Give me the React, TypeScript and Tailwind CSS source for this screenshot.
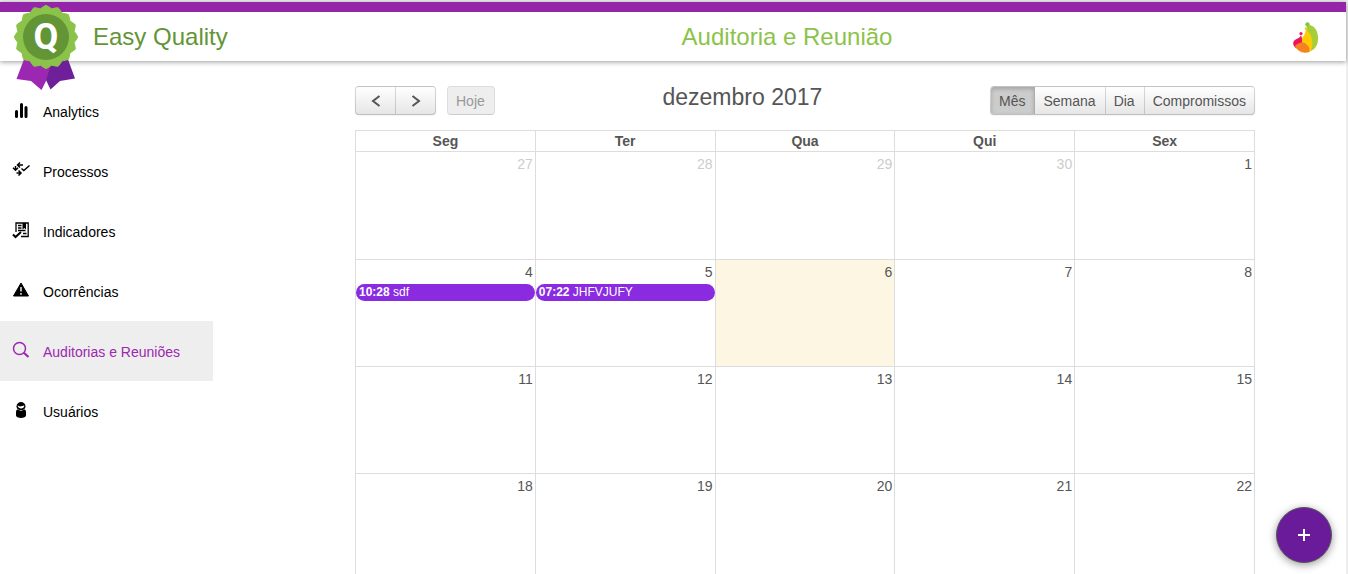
import type { ReactNode } from "react";

const SEAL = Array.from({ length: 64 }, (_, i) => {
  const a = (i / 64) * Math.PI * 2 - Math.PI / 2;
  const r = 30.2 + 1.5 * Math.cos(((i % 4) / 4) * Math.PI * 2);
  return `${(36 + r * Math.cos(a)).toFixed(2)},${(33 + r * Math.sin(a)).toFixed(2)}`;
}).join(" ");

function Badge() {
  return (
    <svg width="72" height="88" viewBox="0 0 72 88" aria-hidden="true">
      <path d="M16 50 L6.500 75 L21 77 L31.500 86 L36 77 L44 58Z" fill="#9c27b0" />
      <path d="M56 50 L65 74.500 L50 77 L40.500 85.500 L36 76 L42 58Z" fill="#6f1f99" />
      <polygon points={SEAL} fill="#8bc34a" stroke="#8bc34a" strokeLinejoin="round" />
      <circle cx="36" cy="33" r="23" fill="#639536" />
      <text x="36" y="45" textAnchor="middle" fill="#fff" fontSize="36" fontWeight="700" fontFamily="Roboto, sans-serif">Q</text>
    </svg>
  );
}

function Flame() {
  return (
    <svg width="28" height="32" viewBox="0 0 28 32" aria-hidden="true">
      <path d="M15 5C18 3 23 5 25 11C27 17 27 26 19 30L13 18Z" fill="#a6ce39" />
      <path d="M13.500 8C16 10 19 13 20 18C21 24 20 28 18 31C13 32 7 29 8 22C9 16 14 15 13.500 8Z" fill="#ffcb05" />
      <path d="M9 14C10 17 11 20 9 24L4 27C1 25 0 21 3 19C6 17 8 17 9 14Z" fill="#ed145b" />
      <path d="M3 25C6 22 11 20 14 23C18 26 18 29 17 31C11 33 5 30 3 25Z" fill="#f58220" />
      <circle cx="15.500" cy="3.500" r="2.200" fill="#8bc53f" />
      <circle cx="9" cy="12.500" r="1.600" fill="#ed145b" />
      <circle cx="14" cy="7.500" r="1.300" fill="#d7d52a" />
    </svg>
  );
}

function Icon({ children }: { children: ReactNode }) {
  return (
    <svg width="18" height="18" viewBox="0 0 18 18" fill="none" stroke="currentColor" strokeWidth="1.500" aria-hidden="true">
      {children}
    </svg>
  );
}

const NAV = [
  {
    label: "Analytics",
    icon: <path d="M4.500 15.500V10.500M9.500 15.500V3.500M14 15.500V6.500" strokeWidth="3" strokeLinecap="round" />,
  },
  {
    label: "Processos",
    icon: (
      <path d="M11 4H6M8 1.500L5.500 4L8 6.500M3.500 5V8.500M1 6.800L3.500 9.300L6 6.800M4.500 12H8M6.500 9.500L9 12L6.500 14.500M9.500 7.500L11.800 9.500L17.500 4.500" />
    ),
  },
  {
    label: "Indicadores",
    icon: (
      <>
        <path d="M4 11V2H16.200V15.500H9M6 4.500H9.500M6 7H9.500M6 9.500H13.500M11 12.500H14.500" strokeWidth="1.300" />
        <path d="M10.500 2V8.500L12.300 7L14 8.500V2Z" fill="currentColor" stroke="none" />
        <path d="M1 13.500L3.500 16L9 11" strokeWidth="2" />
      </>
    ),
  },
  {
    label: "Ocorrências",
    icon: (
      <>
        <path d="M9 2L16.500 15H1.500Z" fill="currentColor" strokeLinejoin="round" strokeWidth="1" />
        <path d="M9 6V10.500M9 12V13.700" stroke="#fff" strokeWidth="1.400" />
      </>
    ),
  },
  {
    label: "Auditorias e Reuniões",
    active: true,
    icon: (
      <>
        <circle cx="7.500" cy="7.500" r="6" />
        <path d="M11.800 11.800L16.500 16" strokeWidth="2.200" />
      </>
    ),
  },
  {
    label: "Usuários",
    icon: (
      <g fill="currentColor" stroke="none">
        <path d="M4.500 5.500C4.500 -.500 13.500 -.500 13.500 5.500C13.500 10.500 4.500 10.500 4.500 5.500Z" />
        <path d="M5.700 4.500L8 5.500L12.300 4.500C12.300 8.500 6 8.500 5.700 4.500Z" fill="#fff" />
        <path d="M4 11C4 9 5 8.500 6 8.500L9 10L12 8.500C13 8.500 14 9 14 11V14.500C14 17.800 4 17.800 4 14.500Z" />
      </g>
    ),
  },
];

const DAYS = ["Seg", "Ter", "Qua", "Qui", "Sex"];
const WEEKS = [
  [27, 28, 29, 30, 1],
  [4, 5, 6, 7, 8],
  [11, 12, 13, 14, 15],
  [18, 19, 20, 21, 22],
];
const EVENTS: Record<number, { time: string; title: string }> = {
  4: { time: "10:28", title: "sdf" },
  5: { time: "07:22", title: "JHFVJUFY" },
};
const VIEWS = ["Mês", "Semana", "Dia", "Compromissos"];

const GROUP =
  "flex h-[29px] overflow-hidden rounded border border-black/15 border-b-black/25 bg-linear-to-b from-white to-[#e6e6e6] shadow-xs";

export default function App() {
  return (
    <div className="flex h-screen flex-col overflow-hidden bg-[#eee] pt-px pr-px font-['Liberation_Sans',Arial,sans-serif] text-sm text-[#555]">
      <div className="flex min-h-0 flex-1 flex-col border-t border-r border-[#eee] bg-white">
        <header className="relative z-10 flex h-[59px] shrink-0 items-center justify-between border-t-10 border-[#9425a8] bg-white pr-[26px] shadow-[0_1px_5px_rgba(0,0,0,0.4)]">
          <a href="#" className="flex w-[282px] items-center text-2xl text-[#639536]">
            <span className="relative h-6 w-[93px]">
              <span className="absolute -top-[21px] left-[10px]"><Badge /></span>
            </span>
            Easy Quality
          </a>
          <h1 className="text-2xl text-[#8bc34a]">Auditoria e Reunião</h1>
          <Flame />
        </header>

        <div className="flex min-h-0 flex-1">
          <nav className="w-[264px] shrink-0 pt-5">
            {NAV.map((item) => (
              <a
                key={item.label}
                href="#"
                className={`flex h-[60px] w-[213px] items-center gap-[13px] pt-0.5 pl-3 ${item.active ? "bg-[#eee] text-[#9c27b0]" : "text-black"}`}
              >
                <span className="pb-1"><Icon>{item.icon}</Icon></span>
                {item.label}
              </a>
            ))}
          </nav>

          <main className="min-w-0 flex-1 pt-[25px]">
            <div className="mx-auto max-w-[900px]">
              <div className="mb-[15px] flex items-center justify-between">
                <div className="flex gap-[11px]">
                  <div className={GROUP}>
                    <button type="button" aria-label="Anterior" className="flex w-10 items-center justify-center border-r border-black/15">
                      <svg width="10" height="12" viewBox="0 0 10 12" fill="none" stroke="#555" strokeWidth="2"><path d="M8.500 1L2 6L8.500 11" /></svg>
                    </button>
                    <button type="button" aria-label="Próximo" className="flex w-[39px] items-center justify-center">
                      <svg width="10" height="12" viewBox="0 0 10 12" fill="none" stroke="#555" strokeWidth="2"><path d="M1.500 1L8 6L1.500 11" /></svg>
                    </button>
                  </div>
                  <button type="button" disabled className="h-[29px] rounded border border-[#ddd] border-b-[#ccc] bg-[#eee] pr-[9px] pl-2 text-[#999]">Hoje</button>
                </div>
                <h2 className="-mt-2 text-[23px] leading-6">dezembro 2017</h2>
                <div className={GROUP}>
                  {VIEWS.map((view, i) => (
                    <button
                      key={view}
                      type="button"
                      className={`pl-2 ${i === 0 ? "bg-[#ccc] shadow-[inset_0_2px_4px_rgba(0,0,0,0.2)]" : ""} ${i < 3 ? "border-r border-black/15 pr-[9px]" : "pr-2"}`}
                    >
                      {view}
                    </button>
                  ))}
                </div>
              </div>

              <table className="w-full table-fixed border-collapse">
                <thead>
                  <tr>
                    {DAYS.map((day) => (
                      <th key={day} className="h-[21px] border border-[#ddd] p-0 leading-5">{day}</th>
                    ))}
                  </tr>
                </thead>
                <tbody>
                  {WEEKS.map((week, w) => (
                    <tr key={week[0]} className={w === 0 ? "h-[108px]" : "h-[107px]"}>
                      {week.map((day) => {
                        const event = EVENTS[day];
                        return (
                          <td key={day} className={`border border-[#ddd] p-0 align-top ${day === 6 ? "bg-[#fdf6e3]" : ""}`}>
                            <div className={`pt-0.5 pr-0.5 text-right leading-5 ${w === 0 && day > 1 ? "text-[#ccc]" : ""}`}>{day}</div>
                            {event && (
                              <a href="#" className="mt-0.5 block rounded-full bg-[#8a2be2] px-[3px] text-xs leading-[17px] text-white">
                                <b>{event.time}</b> {event.title}
                              </a>
                            )}
                          </td>
                        );
                      })}
                    </tr>
                  ))}
                </tbody>
              </table>
            </div>
          </main>
        </div>
      </div>

      <button
        type="button"
        aria-label="Adicionar"
        className="fixed right-4 bottom-[11px] flex size-14 items-center justify-center rounded-full border border-[#555] bg-[#6a1b9a] shadow-[0_2px_8px_rgba(0,0,0,0.4)]"
      >
        <svg width="12" height="12" viewBox="0 0 12 12" stroke="#fff" strokeWidth="2"><path d="M6 0V12M0 6H12" /></svg>
      </button>
    </div>
  );
}
